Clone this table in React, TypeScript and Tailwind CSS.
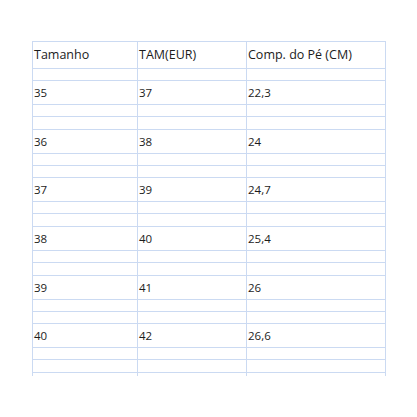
const rows = [
  ["35", "37", "22,3"],
  ["36", "38", "24"],
  ["37", "39", "24,7"],
  ["38", "40", "25,4"],
  ["39", "41", "26"],
  ["40", "42", "26,6"],
];

const cols = ["w-[105px]", "w-[109px]", "w-[139px]"];

function Row({ cells, h, text, last }: { cells: string[]; h: string; text?: string; last?: boolean }) {
  return (
    <div className={`flex ${h} ${last ? "" : "border-b border-[#cbdaf2]"}`}>
      {cells.map((c, i) => (
        <div
          key={i}
          className={`${cols[i]} shrink-0 border-r border-[#cbdaf2] flex items-center pl-[1px] ${text ?? ""}`}
        >
          {c}
        </div>
      ))}
    </div>
  );
}

export default function App() {
  const empty = ["", "", ""];
  return (
    <div className="w-[417px] h-[417px] bg-white pt-[41px] pl-[32px] text-[#1c1c1c] font-['Open_Sans',sans-serif]">
      <div className="w-[354px] border-t border-l border-[#cbdaf2]">
        <Row cells={["Tamanho", "TAM(EUR)", "Comp. do Pé (CM)"]} h="h-[27px]" text="text-[12.5px]" />
        <Row cells={empty} h="h-[12px]" />
        {rows.map((r, i) => (
          <div key={i}>
            <Row cells={r} h="h-[24px]" text="text-[11.5px]" />
            <Row cells={empty} h="h-[12px]" />
            <Row cells={empty} h="h-[12.67px]" />
          </div>
        ))}
        <Row cells={empty} h="h-[3px]" last />
      </div>
    </div>
  );
}
